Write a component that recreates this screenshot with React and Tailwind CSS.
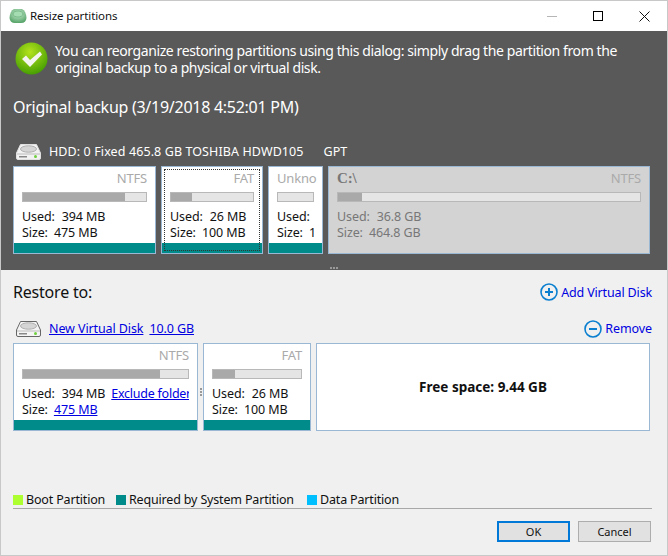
import React from 'react';

const FONT = "font-['Noto_Sans',sans-serif]";

// Partition card used in both the backup row and the restore row
const PartitionCard = ({ width, fs, used, size, usedPct, label, name, sizeLink, extra, focus, dim }) => (
  <div className={`relative shrink-0 h-[88px] flex flex-col border border-[#9ab8d4] overflow-hidden ${width} ${dim ? 'bg-[#d3d3d3]' : 'bg-white'}`}>
    <div className="flex-1 flex flex-col min-h-0 overflow-hidden px-2">
      <div className="flex justify-between items-center h-[22px] text-[13px] leading-[22px] tracking-[-0.2px] whitespace-nowrap">
        {label && <span className="font-['Liberation_Serif',serif] font-bold text-[15px] text-[#777]">{label}</span>}
        {name && <span className="text-[#aaa]">{name}</span>}
        <span className="ml-auto text-[#aaa]">{fs}</span>
      </div>
      <div className="h-[10px] mt-[3px] shrink-0 border border-[#b8b8b8] bg-[#e5e5e5]">
        {usedPct > 0 && <div className="h-full bg-[#a9a9a9]" style={{ width: `${usedPct}%` }} />}
      </div>
      <div className={`mt-[7px] text-[12.5px] leading-[16px] tracking-[-0.1px] whitespace-nowrap overflow-hidden ${dim ? 'text-[#777]' : 'text-[#111]'}`}>
        <div className="flex">
          <span>Used:</span>
          <span className="ml-[7px]">{used}</span>
          {extra && <a className="ml-[6px] text-[#0000e0] underline tracking-[-0.25px]">{extra}</a>}
        </div>
        <div className="flex">
          <span>Size:</span>
          {sizeLink ? (
            <a className="ml-[6px] text-[#0000e0] underline">{size}</a>
          ) : (
            <span className="ml-[6px]">{size}</span>
          )}
        </div>
      </div>
    </div>
    {!dim && <div className="h-[10px] shrink-0 bg-[#008b8b]" />}
    {focus && <div className="absolute left-[2px] right-[2px] top-[2px] bottom-[2px] border border-dotted border-[#333]" />}
  </div>
);

const DiskIcon = ({ dark }) => (
  <svg width="25" height="16" viewBox="0 0 25 16" className="shrink-0">
    <path d="M4.5 0.5 H20.5 L24.5 9 V14 a1.5 1.5 0 0 1 -1.5 1.5 H2 a1.5 1.5 0 0 1 -1.5 -1.5 V9 Z" fill={dark ? '#f2f2f2' : '#f4f4f4'} stroke={dark ? '#e0e0e0' : '#666'} />
    <ellipse cx="12.5" cy="5" rx="8" ry="3.2" fill="#d5d5d5" stroke="#b0b0b0" />
    <rect x="1" y="9.5" width="23" height="1" fill="#bbb" />
    <rect x="3" y="12" width="8" height="1.5" fill="#888" />
    <circle cx="19.5" cy="12.5" r="1.5" fill="#6fcf3f" />
  </svg>
);

const CircleIcon = ({ plus }) => (
  <svg width="18" height="18" viewBox="0 0 18 18" className="shrink-0">
    <circle cx="9" cy="9" r="8" fill="none" stroke="#0a7fd0" strokeWidth="1.6" />
    <rect x="5" y="8" width="8" height="2" fill="#0a7fd0" />
    {plus && <rect x="8" y="5" width="2" height="8" fill="#0a7fd0" />}
  </svg>
);

const LegendItem = ({ color, label, width }) => (
  <div className={`flex items-center gap-[3px] ${width}`}>
    <div className={`w-[10px] h-[10px] ${color}`} />
    <span>{label}</span>
  </div>
);

export default function App() {
  return (
    <div className={`w-[668px] h-[556px] flex flex-col bg-[#f0f0f0] border border-[#c8c8c8] ${FONT}`}>
      {/* Title bar */}
      <div className="h-[30px] shrink-0 bg-white flex items-center">
        <svg width="18" height="16" viewBox="0 0 18 16" className="ml-[8px] shrink-0">
          <defs>
            <radialGradient id="app" cx="50%" cy="35%" r="70%">
              <stop offset="0%" stopColor="#c8ecd0" />
              <stop offset="100%" stopColor="#4f9f62" />
            </radialGradient>
          </defs>
          <path d="M5 1 H13 Q17 3 17.5 10 Q17 15 12 15 H6 Q1 15 0.5 10 Q1 3 5 1 Z" fill="url(#app)" />
          <ellipse cx="9" cy="6" rx="5" ry="3" fill="#a5dcb2" stroke="#5fa872" strokeWidth="0.6" />
        </svg>
        <span className="ml-[3px] text-[11.5px] text-[#111] tracking-[-0.1px]">Resize partitions</span>
        <div className="ml-auto flex items-center">
          <div className="w-[46px] flex justify-center">
            <div className="w-[10px] h-px bg-[#b5b5b5]" />
          </div>
          <div className="w-[46px] flex justify-center">
            <div className="w-[10px] h-[10px] border border-black" />
          </div>
          <div className="w-[46px] flex justify-center">
            <svg width="11" height="11" viewBox="0 0 11 11">
              <path d="M0.5 0.5 L10.5 10.5 M10.5 0.5 L0.5 10.5" stroke="#111" fill="none" />
            </svg>
          </div>
        </div>
      </div>

      {/* Original backup */}
      <div className="h-[239px] shrink-0 bg-[#595959] text-white flex flex-col pl-[12px] pr-[17px]">
        <div className="flex mt-[11px] ml-[2px] h-[34px]">
          <svg width="33" height="33" viewBox="0 0 33 33" className="shrink-0">
            <defs>
              <radialGradient id="ok" cx="45%" cy="30%" r="75%">
                <stop offset="0%" stopColor="#b4e31e" />
                <stop offset="100%" stopColor="#3f9a00" />
              </radialGradient>
            </defs>
            <circle cx="16.5" cy="16.5" r="16" fill="url(#ok)" />
            <path d="M7 17 L11 13.5 L15 18 L25 9.5 L27 12.5 L15 25 Z" fill="#f4f4f0" />
          </svg>
          <p className="ml-[7px] text-[14px] leading-[17px] tracking-[-0.4px] whitespace-nowrap">
            You can reorganize restoring partitions using this dialog: simply drag the partition from the<br />
            original backup to a physical or virtual disk.
          </p>
        </div>
        <h2 className="mt-[18px] text-[16px] leading-[26px] font-normal tracking-[-0.27px]">Original backup (3/19/2018 4:52:01 PM)</h2>
        <div className="mt-[24px] ml-[3px] h-[16px] flex items-center text-[12.5px] whitespace-nowrap">
          <DiskIcon dark />
          <span className="ml-[8px] tracking-[0.1px]">HDD: 0 Fixed 465.8 GB TOSHIBA HDWD105</span>
          <span className="ml-[20px]">GPT</span>
        </div>
        <div className="mt-[6px] flex gap-[5px]">
          <PartitionCard width="w-[143px]" fs="NTFS" used="394 MB" size="475 MB" usedPct={83} />
          <PartitionCard width="w-[102px]" fs="FAT" used="26 MB" size="100 MB" usedPct={26} focus />
          <PartitionCard width="w-[55px]" name="Unkno" fs="" used="" size="1" usedPct={0} />
          <PartitionCard width="w-[322px]" label="C:\" fs="NTFS" used="36.8 GB" size="464.8 GB" usedPct={8} dim />
        </div>
        {/* Splitter grip */}
        <div className="mt-[13px] ml-[4px] flex justify-center gap-px">
          <div className="w-[2px] h-[2px] bg-[#999]" />
          <div className="w-[2px] h-[2px] bg-[#999]" />
          <div className="w-[2px] h-[2px] bg-[#999]" />
        </div>
      </div>

      {/* Restore to */}
      <div className="flex-1 flex flex-col pl-[12px] pr-[15px] text-[#111]">
        <div className="mt-[9px] h-[26px] flex items-center justify-between">
          <h2 className="text-[16px] font-normal tracking-[-0.2px]">Restore to:</h2>
          <a className="flex items-center gap-[3px] text-[12.5px] text-[#0000e0] tracking-[-0.15px]">
            <CircleIcon plus />
            <span className="mt-[2px]">Add Virtual Disk</span>
          </a>
        </div>
        <div className="mt-[14px] h-[20px] flex items-center">
          <div className="ml-[3px]"><DiskIcon /></div>
          <a className="ml-[8px] text-[12.5px] text-[#0000e0] underline tracking-[-0.1px]">New Virtual Disk</a>
          <a className="ml-[6px] text-[12.5px] text-[#0000e0] underline tracking-[-0.1px]">10.0 GB</a>
          <a className="ml-auto flex items-center gap-[3px] text-[12.5px] text-[#0000e0] tracking-[-0.1px]">
            <CircleIcon />
            Remove
          </a>
        </div>
        <div className="mt-[4px] flex">
          <PartitionCard width="w-[185px]" fs="NTFS" used="394 MB" size="475 MB" usedPct={83} extra="Exclude folder" sizeLink />
          <div className="w-[5px] flex flex-col items-center justify-center gap-px pt-[9px]">
            <div className="w-[2px] h-[2px] bg-[#999]" />
            <div className="w-[2px] h-[2px] bg-[#999]" />
            <div className="w-[2px] h-[2px] bg-[#999]" />
          </div>
          <PartitionCard width="w-[108px]" fs="FAT" used="26 MB" size="100 MB" usedPct={25} />
          <div className="ml-[5px] w-[334px] h-[88px] bg-white border border-[#9ab8d4] flex items-center justify-center text-[13.5px] font-bold">
            Free space: 9.44 GB
          </div>
        </div>

        {/* Legend */}
        <div className="mt-[61px] h-[16px] flex items-center text-[12.5px] tracking-[-0.17px] whitespace-nowrap">
          <LegendItem color="bg-[#adff2f]" label="Boot Partition" width="w-[103px]" />
          <LegendItem color="bg-[#008b8b]" label="Required by System Partition" width="w-[191px]" />
          <LegendItem color="bg-[#00bfff]" label="Data Partition" />
        </div>
        <div className="h-px bg-[#a8a8a8] w-[639px]" />

        {/* Buttons */}
        <div className="mt-[12px] pr-px flex justify-end gap-[8px] text-[11px]">
          <button className="w-[73px] h-[21px] leading-[17px] bg-[#e1e1e1] border-2 border-[#0078d7]">OK</button>
          <button className="w-[73px] h-[21px] leading-[19px] bg-[#e1e1e1] border border-[#adadad]">Cancel</button>
        </div>
      </div>
    </div>
  );
}
